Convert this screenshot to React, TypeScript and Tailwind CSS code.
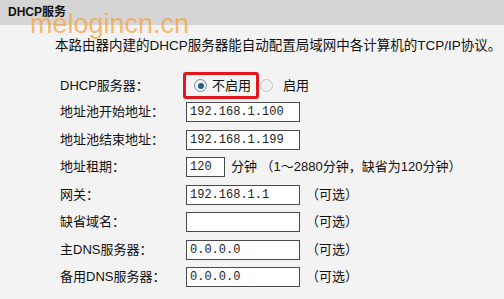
const font = "font-['Liberation_Sans','Noto_Sans_CJK_SC',sans-serif]";

const Input = ({ value, className = 'w-[114px]' }: { value: string; className?: string }) => (
  <div
    className={`${className} h-[20px] bg-white border border-[#4a4a4a] pl-[3px] flex items-center text-[12px] text-[#222] font-['Liberation_Mono',monospace] leading-none`}
  >
    {value}
  </div>
);

const Radio = ({ checked }: { checked?: boolean }) => (
  <span
    className={`w-[13px] h-[13px] rounded-full border flex items-center justify-center ${
      checked ? 'border-[#7a8a9a] bg-[#eef2f6]' : 'border-[#c4c4c4] bg-[#f0f0f0]'
    }`}
  >
    {checked && <span className="w-[6px] h-[6px] rounded-full bg-[#2c5a8c]" />}
  </span>
);

const rows: { label: string; value: string; extra?: string; short?: boolean }[] = [
  { label: '地址池开始地址：', value: '192.168.1.100' },
  { label: '地址池结束地址：', value: '192.168.1.199' },
  { label: '地址租期：', value: '120', short: true, extra: '分钟 （1～2880分钟，缺省为120分钟）' },
  { label: '网关：', value: '192.168.1.1', extra: '（可选）' },
  { label: '缺省域名：', value: '', extra: '（可选）' },
  { label: '主DNS服务器：', value: '0.0.0.0', extra: '（可选）' },
  { label: '备用DNS服务器：', value: '0.0.0.0', extra: '（可选）' },
];

export default function App() {
  return (
    <div className={`relative w-[504px] h-[299px] overflow-hidden bg-[#f3f3f3] text-[#111] ${font}`}>
      <div className="h-[25px] bg-[#d5d5d5] pl-[8px] pt-[4px] text-[12px] font-bold leading-[16px]">
        DHCP服务
      </div>
      <p className="pl-[55px] mt-[12px] text-[13.5px] leading-[18px] whitespace-nowrap">
        本路由器内建的DHCP服务器能自动配置局域网中各计算机的TCP/IP协议。
      </p>

      <div className="pl-[60px] mt-[16px]">
        <div className="flex items-center h-[31px] pb-[2px]">
          <span className="w-[123px] text-[13px]">DHCP服务器：</span>
          <div className="h-[27px] w-[76px] border-[3px] border-[#e0181e] rounded-[3px] flex items-center pl-[8px] gap-[5px] text-[13px]">
            <Radio checked />
            <span>不启用</span>
          </div>
          <div className="flex items-center ml-[1px] gap-[10px] text-[13px]">
            <Radio />
            <span>启用</span>
          </div>
        </div>

        {rows.map((r) => (
          <div key={r.label} className="flex items-start h-[27.5px]">
            <span className="w-[126px] h-[20px] flex items-center text-[13px]">{r.label}</span>
            <Input value={r.value} className={r.short ? 'w-[39px]' : 'w-[114px]'} />
            {r.extra && (
              <span className={`h-[20px] flex items-center text-[13px] ${r.short ? 'ml-[6px]' : 'ml-[6px]'}`}>
                {r.extra}
              </span>
            )}
          </div>
        ))}
      </div>

      <div className="absolute left-[30px] top-[11px] text-[27px] leading-none text-[#f5a030]/70 font-['Liberation_Sans',sans-serif]">
        melogincn.cn
      </div>
    </div>
  );
}
